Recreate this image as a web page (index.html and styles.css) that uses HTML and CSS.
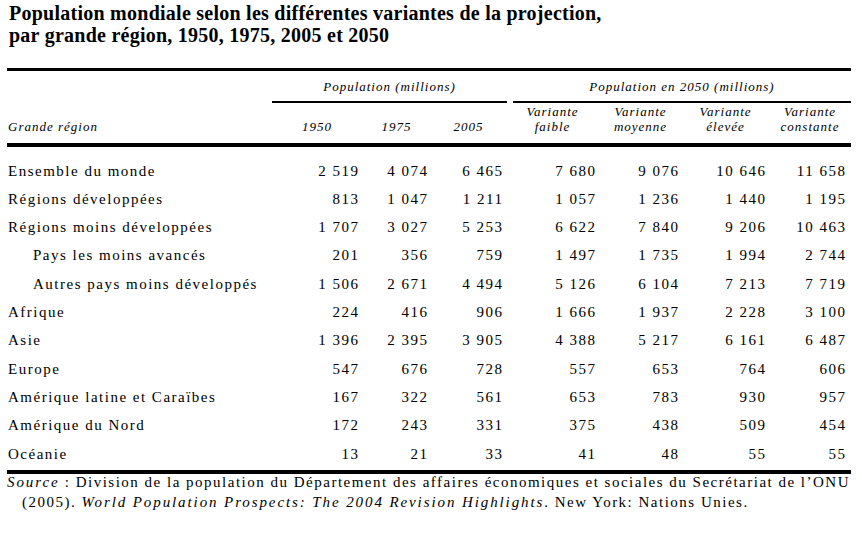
FILE: index.html
```html
<!DOCTYPE html>
<html lang="fr">
<head>
<meta charset="utf-8">
<title>Population mondiale selon les différentes variantes de la projection</title>
<link rel="stylesheet" href="styles.css">
</head>
<body>
<div class="page">
  <h1 class="title">Population mondiale selon les différentes variantes de la projection,<br>par grande région, 1950, 1975, 2005 et 2050</h1>
  <div class="tbl">
    <div class="thead">
      <div class="grp grp-pop"><span>Population (millions)</span></div>
      <div class="grp grp-2050"><span>Population en 2050 (millions)</span></div>
      <div class="hcell hlabel">Grande région</div>
      <div class="hcell">1950</div>
      <div class="hcell">1975</div>
      <div class="hcell">2005</div>
      <div class="hcell hvar">Variante<br>faible</div>
      <div class="hcell hvar">Variante<br>moyenne</div>
      <div class="hcell hvar">Variante<br>élevée</div>
      <div class="hcell hvar">Variante<br>constante</div>
    </div>
    <div class="tbody">
      <div class="row"><div class="lbl">Ensemble du monde</div><div class="num">2 519</div><div class="num">4 074</div><div class="num">6 465</div><div class="num">7 680</div><div class="num">9 076</div><div class="num">10 646</div><div class="num last">11 658</div></div>
      <div class="row"><div class="lbl">Régions développées</div><div class="num">813</div><div class="num">1 047</div><div class="num">1 211</div><div class="num">1 057</div><div class="num">1 236</div><div class="num">1 440</div><div class="num last">1 195</div></div>
      <div class="row"><div class="lbl">Régions moins développées</div><div class="num">1 707</div><div class="num">3 027</div><div class="num">5 253</div><div class="num">6 622</div><div class="num">7 840</div><div class="num">9 206</div><div class="num last">10 463</div></div>
      <div class="row"><div class="lbl sub">Pays les moins avancés</div><div class="num">201</div><div class="num">356</div><div class="num">759</div><div class="num">1 497</div><div class="num">1 735</div><div class="num">1 994</div><div class="num last">2 744</div></div>
      <div class="row"><div class="lbl sub">Autres pays moins développés</div><div class="num">1 506</div><div class="num">2 671</div><div class="num">4 494</div><div class="num">5 126</div><div class="num">6 104</div><div class="num">7 213</div><div class="num last">7 719</div></div>
      <div class="row"><div class="lbl">Afrique</div><div class="num">224</div><div class="num">416</div><div class="num">906</div><div class="num">1 666</div><div class="num">1 937</div><div class="num">2 228</div><div class="num last">3 100</div></div>
      <div class="row"><div class="lbl">Asie</div><div class="num">1 396</div><div class="num">2 395</div><div class="num">3 905</div><div class="num">4 388</div><div class="num">5 217</div><div class="num">6 161</div><div class="num last">6 487</div></div>
      <div class="row"><div class="lbl">Europe</div><div class="num">547</div><div class="num">676</div><div class="num">728</div><div class="num">557</div><div class="num">653</div><div class="num">764</div><div class="num last">606</div></div>
      <div class="row"><div class="lbl">Amérique latine et Caraïbes</div><div class="num">167</div><div class="num">322</div><div class="num">561</div><div class="num">653</div><div class="num">783</div><div class="num">930</div><div class="num last">957</div></div>
      <div class="row"><div class="lbl">Amérique du Nord</div><div class="num">172</div><div class="num">243</div><div class="num">331</div><div class="num">375</div><div class="num">438</div><div class="num">509</div><div class="num last">454</div></div>
      <div class="row"><div class="lbl">Océanie</div><div class="num">13</div><div class="num">21</div><div class="num">33</div><div class="num">41</div><div class="num">48</div><div class="num">55</div><div class="num last">55</div></div>
    </div>
  </div>
  <p class="source"><i>Source</i> : Division de la population du Département des affaires économiques et sociales du Secrétariat de l’ONU<br>(2005). <i>World Population Prospects: The 2004 Revision Highlights</i>. New York: Nations Unies.</p>
</div>
</body>
</html>
```

FILE: styles.css
```css
html, body {
  margin: 0;
  padding: 0;
  background: #fff;
}

body {
  color: #000;
  font-family: "Liberation Serif", "Times New Roman", serif;
}

.page {
  width: 844px;
  padding: 2px 0 0 7px;
}

.title {
  margin: 0 0 22px 2px;
  font-size: 20px;
  line-height: 22px;
  font-weight: bold;
  letter-spacing: 0.25px;
}

.tbl {
  border-top: 3px solid #000;
}

.thead,
.row {
  display: grid;
  grid-template-columns: 265px 90px 69px 75px 93px 83px 87px 82px;
}

.thead {
  font-style: italic;
  font-size: 13px;
  letter-spacing: 1px;
  padding-bottom: 8.5px;
  border-bottom: 4px solid #000;
}

.grp {
  grid-row: 1;
  text-align: center;
  line-height: 16px;
  padding: 8px 0 6px;
  border-bottom: 2px solid #000;
}

.grp-pop {
  grid-column: 2 / 5;
  margin-right: -1px;
}

.grp-2050 {
  grid-column: 5 / 9;
  margin-left: 7px;
}

.hcell {
  grid-row: 2;
  align-self: end;
  text-align: center;
  line-height: 15px;
}

.hvar {
  margin-top: 1px;
}

.hlabel {
  text-align: left;
  padding-left: 1px;
}

.tbody {
  padding: 10px 0 1.4px;
  border-bottom: 4px solid #000;
  font-size: 15px;
  letter-spacing: 1.5px;
}

.row {
  height: 28.33px;
  line-height: 28.33px;
  white-space: nowrap;
}

.lbl {
  padding-left: 1px;
}

.lbl.sub {
  padding-left: 26px;
}

.num {
  text-align: right;
  padding-right: 2.5px;
}

.num.last {
  padding-right: 4.5px;
}

.source {
  margin: -2px 0 0;
  font-size: 15px;
  line-height: 20px;
  letter-spacing: 1.5px;
  padding-left: 15px;
  text-indent: -15px;
  white-space: nowrap;
}

.source i {
  letter-spacing: 1.9px;
}
```
